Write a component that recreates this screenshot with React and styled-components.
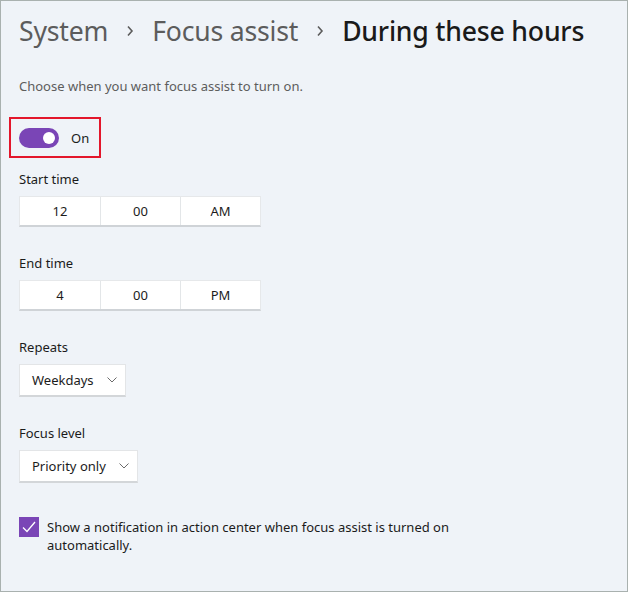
import React from "react";
import styled, { createGlobalStyle } from "styled-components";

const Global = createGlobalStyle`
  html, body { margin: 0; padding: 0; }
  body {
    font-family: "Noto Sans", "Open Sans", sans-serif;
    background: #eff3f8;
  }
`;

const Frame = styled.div`
  box-sizing: border-box;
  width: 628px;
  height: 592px;
  border: 1px solid #a9b1af;
  background: #eff3f8;
  padding: 10px 18px 0 18px;
  display: flex;
  flex-direction: column;
  color: #1b1b1b;
`;

const Breadcrumb = styled.div`
  display: flex;
  align-items: center;
  gap: 18px;
  font-size: 26.6px;
  line-height: 40px;
  height: 40px;
  white-space: nowrap;
`;

const Crumb = styled.span`
  color: ${(p) => (p.current ? "#1a1a1a" : "#5c5c5c")};
  font-weight: ${(p) => (p.current ? 500 : 400)};
  letter-spacing: -0.2px;
`;

const Sep = styled.span`
  display: flex;
  align-items: center;
  color: #5c5c5c;
`;

const Description = styled.p`
  margin: 26px 0 0 0;
  font-size: 13px;
  line-height: 18px;
  color: #5d5d5d;
`;

const Highlight = styled.div`
  box-sizing: border-box;
  margin: 22px 0 0 -10px;
  width: 92px;
  height: 41px;
  border: 2px solid #e3162b;
  display: flex;
  align-items: center;
  padding-left: 8px;
  gap: 12px;
`;

const Track = styled.div`
  width: 40px;
  height: 20px;
  border-radius: 10px;
  background: #7a45b6;
  position: relative;
  flex-shrink: 0;
`;

const Knob = styled.div`
  position: absolute;
  right: 4px;
  top: 4px;
  width: 12px;
  height: 12px;
  border-radius: 50%;
  background: #fff;
`;

const SwitchText = styled.span`
  font-size: 13px;
  color: #1b1b1b;
`;

const Label = styled.div`
  font-size: 13px;
  line-height: 18px;
  color: #1b1b1b;
  margin-top: ${(p) => p.gap}px;
`;

const TimeBox = styled.div`
  box-sizing: border-box;
  margin-top: 8px;
  width: 242px;
  height: 31px;
  display: grid;
  grid-template-columns: 1fr 1fr 1fr;
  background: #fff;
  border: 1px solid #e6e8ea;
  border-bottom: 2px solid #cfd3d7;
`;

const TimeCell = styled.div`
  display: flex;
  align-items: center;
  justify-content: center;
  font-size: 13px;
  color: #1b1b1b;
  border-left: ${(p) => (p.first ? "none" : "1px solid #e3e6e8")};
`;

const Select = styled.div`
  box-sizing: border-box;
  margin-top: 8px;
  align-self: flex-start;
  height: 33px;
  display: flex;
  align-items: center;
  gap: 10px;
  padding: 0 8px 0 12px;
  background: #fff;
  border: 1px solid #e3e5e7;
  border-bottom: 2px solid #d3d6d9;
  font-size: 13px;
  color: #1b1b1b;
  width: ${(p) => p.w}px;
  justify-content: space-between;
`;

const CheckRow = styled.div`
  display: flex;
  align-items: flex-start;
  gap: 8px;
  margin-top: 34px;
`;

const Box = styled.div`
  width: 20px;
  height: 20px;
  background: #7a45b6;
  flex-shrink: 0;
  display: flex;
  align-items: center;
  justify-content: center;
`;

const CheckText = styled.div`
  font-size: 13px;
  line-height: 18px;
  color: #1b1b1b;
  max-width: 420px;
  margin-top: 1px;
`;

const Chevron = () => (
  <svg width="10" height="6" viewBox="0 0 10 6" fill="none">
    <path d="M0.5 0.5 L5 5 L9.5 0.5" stroke="#6b6b6b" strokeWidth="1" />
  </svg>
);

const CrumbChevron = () => (
  <svg width="8" height="12" viewBox="0 0 8 12" fill="none">
    <path d="M2 1.5 L6 6 L2 10.5" stroke="#5c5c5c" strokeWidth="1.6" />
  </svg>
);

const Tick = () => (
  <svg width="14" height="12" viewBox="0 0 14 12" fill="none">
    <path d="M1 6.5 L5 10.5 L13 1" stroke="#fff" strokeWidth="1.3" />
  </svg>
);

const TimePicker = ({ values }) => (
  <TimeBox>
    {values.map((v, i) => (
      <TimeCell key={i} first={i === 0}>{v}</TimeCell>
    ))}
  </TimeBox>
);

export default function App() {
  return (
    <>
      <Global />
      <Frame>
        <Breadcrumb>
          <Crumb>System</Crumb>
          <Sep><CrumbChevron /></Sep>
          <Crumb>Focus assist</Crumb>
          <Sep><CrumbChevron /></Sep>
          <Crumb current>During these hours</Crumb>
        </Breadcrumb>
        <Description>Choose when you want focus assist to turn on.</Description>
        <Highlight>
          <Track><Knob /></Track>
          <SwitchText>On</SwitchText>
        </Highlight>
        <Label gap={12}>Start time</Label>
        <TimePicker values={["12", "00", "AM"]} />
        <Label gap={27}>End time</Label>
        <TimePicker values={["4", "00", "PM"]} />
        <Label gap={27}>Repeats</Label>
        <Select w={107}>Weekdays <Chevron /></Select>
        <Label gap={27}>Focus level</Label>
        <Select w={119}>Priority only <Chevron /></Select>
        <CheckRow>
          <Box><Tick /></Box>
          <CheckText>
            Show a notification in action center when focus assist is turned on automatically.
          </CheckText>
        </CheckRow>
      </Frame>
    </>
  );
}
